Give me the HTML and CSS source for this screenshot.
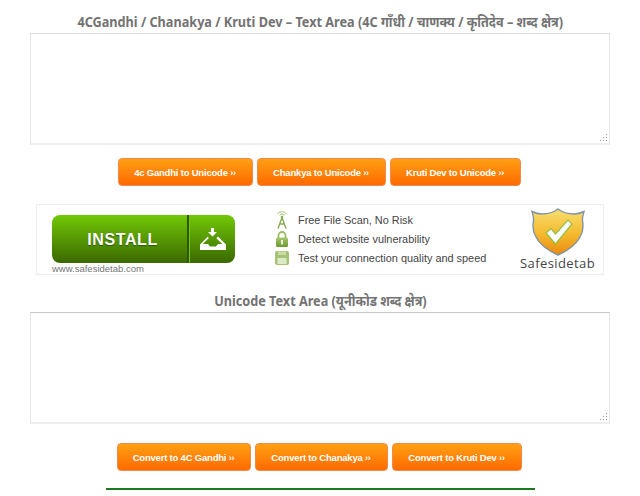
FILE: index.html
```html
<!DOCTYPE html>
<html lang="en">
<head>
    <meta charset="UTF-8">
    <meta name="viewport" content="width=device-width, initial-scale=1.0">
    <title>Unicode Converter</title>
    <link rel="stylesheet" href="styles.css">
</head>
<body>

    <div class="container">
        <h2>4CGandhi / Chanakya / Kruti Dev – Text Area (4C गाँधी / चाणक्य / कृतिदेव – शब्द क्षेत्र)</h2>
        <textarea class="text-box"></textarea>

        <div class="btn-row">
            <button class="btn btn-a">4c Gandhi to Unicode <span class="arrows">››</span></button>
            <button class="btn btn-b">Chankya to Unicode <span class="arrows">››</span></button>
            <button class="btn btn-c">Kruti Dev to Unicode <span class="arrows">››</span></button>
        </div>

        <!-- Ad banner -->
        <div class="banner">
            <div class="banner-left">
                <div class="install">
                    <span class="install-label">INSTALL</span>
                    <span class="install-icon">
                        <svg width="26" height="23" viewBox="0 0 26 23">
                            <path d="M11 0h3v4h3l-4.500 4.500L8 4h3z" fill="#fff"/>
                            <path d="M8 8.500L0 16.500V22h26v-5.500l-8-8-1.700 1.700 6 5.800H18l-2 2.500h-6L8 16H2.700l6-5.800z" fill="#fff"/>
                        </svg>
                    </span>
                </div>
                <div class="banner-url">www.safesidetab.com</div>
            </div>

            <ul class="features">
                <li>
                    <svg width="14" height="18" viewBox="0 0 14 18">
                        <path d="M2.500 3a5.500 5.500 0 0 1 9 0M4.500 4.500a3 3 0 0 1 5 0" fill="none" stroke="#b9d08f" stroke-width="1.100"/>
                        <circle cx="7" cy="6" r="1.300" fill="#8bab55"/>
                        <path d="M7 6.500l-4 11M7 6.500l4 11M4.500 13h5" fill="none" stroke="#8bab55" stroke-width="1.400"/>
                    </svg>
                    Free File Scan, No Risk
                </li>
                <li>
                    <svg width="14" height="16" viewBox="0 0 14 16">
                        <defs>
                            <linearGradient id="lock" x1="0" y1="0" x2="0" y2="1">
                                <stop offset="0" stop-color="#a9c76e"/>
                                <stop offset="1" stop-color="#6d9a2e"/>
                            </linearGradient>
                        </defs>
                        <path d="M3.500 7V4.500a3.500 3.500 0 0 1 7 0V7" fill="none" stroke="#9dbb62" stroke-width="1.800"/>
                        <rect x="1" y="6.500" width="12" height="9.500" rx="1.500" fill="url(#lock)"/>
                        <rect x="6" y="9" width="2" height="4.500" fill="#eef4e0"/>
                    </svg>
                    Detect website vulnerability
                </li>
                <li>
                    <svg width="14" height="14" viewBox="0 0 14 14">
                        <rect x="0" y="0" width="14" height="14" rx="2" fill="#a6c274"/>
                        <rect x="3" y="0.500" width="8" height="3.500" fill="#c9dca6"/>
                        <rect x="2.500" y="7" width="9" height="6" fill="#dde9c6"/>
                    </svg>
                    Test your connection quality and speed
                </li>
            </ul>

            <div class="brand">
                <svg width="54" height="48" viewBox="0 0 54 48">
                    <defs>
                        <linearGradient id="shield" x1="0" y1="0" x2="0" y2="1">
                            <stop offset="0" stop-color="#f9df70"/>
                            <stop offset="0.550" stop-color="#f5b92e"/>
                            <stop offset="1" stop-color="#e98a0c"/>
                        </linearGradient>
                    </defs>
                    <path d="M27 1C31 4 37 6 43 6C47 6 50 5 53 3.500C52 7 51 10 51.500 13C52.500 18 52 24 49 29C45 37 36 43 27 47C18 43 9 37 5 29C2 24 1.500 18 2.500 13C3 10 2 7 1 3.500C4 5 7 6 11 6C17 6 23 4 27 1Z" fill="url(#shield)" stroke="#7f93a8" stroke-width="1.400"/>
                    <path d="M15 25l5-4.500 4.500 5.500L37 12l4 4-16.500 20z" fill="#fff" stroke="#93bf3f" stroke-width="1.200"/>
                </svg>
                <span class="brand-name">Safesidetab</span>
            </div>
        </div>

        <h2 class="second">Unicode Text Area (यूनीकोड शब्द क्षेत्र)</h2>
        <textarea class="text-box box-two"></textarea>

        <div class="btn-row row-two">
            <button class="btn btn-d">Convert to 4C Gandhi <span class="arrows">››</span></button>
            <button class="btn btn-e">Convert to Chanakya <span class="arrows">››</span></button>
            <button class="btn btn-f">Convert to Kruti Dev <span class="arrows">››</span></button>
        </div>

        <div class="rule"></div>
    </div>

</body>
</html>
```

FILE: styles.css
```css
* {
    margin: 0;
    padding: 0;
    box-sizing: border-box;
}
html {
    overflow: hidden;
}
body {
    background: #fff;
    font-family: "Liberation Sans", Arial, sans-serif;
    height: 496px;
    overflow: hidden;
}
.container {
    display: flex;
    flex-direction: column;
    align-items: center;
    padding-top: 12px;
}
h2 {
    font-family: "Noto Sans", "Noto Sans Devanagari", sans-serif;
    font-size: 14px;
    font-weight: bold;
    line-height: 19px;
    margin-bottom: 2px;
    color: #737373;
    white-space: nowrap;
    transform: scaleX(0.905);
}
.text-box {
    display: block;
    width: 580px;
    height: 112px;
    border: 1px solid #e6e6e6;
    border-top-color: #dcdcdc;
    border-bottom: 2px solid #eeeeee;
    outline: none;
    background: #fff;
}
.box-two {
    border-top-color: #c8c8c8;
}
/* little dotted grip instead of the default lines */
.text-box::-webkit-resizer {
    background:
        linear-gradient(#999, #999) 12px 12px / 1px 1px no-repeat,
        linear-gradient(#999, #999) 9px 12px / 1px 1px no-repeat,
        linear-gradient(#999, #999) 6px 12px / 1px 1px no-repeat,
        linear-gradient(#999, #999) 12px 9px / 1px 1px no-repeat,
        linear-gradient(#999, #999) 9px 9px / 1px 1px no-repeat,
        linear-gradient(#999, #999) 12px 6px / 1px 1px no-repeat;
}
.btn-row {
    display: flex;
    gap: 4px;
    margin-top: 13px;
    margin-right: 2px;
}
.btn {
    height: 28px;
    border: 1px solid #f08a4a;
    border-radius: 4px;
    background: linear-gradient(#ffa014, #ff6a00);
    color: #fff;
    font-family: "Liberation Sans", Arial, sans-serif;
    font-size: 9.500px;
    font-weight: bold;
    letter-spacing: -0.2px;
}
.arrows {
    font-size: 9px;
}
.btn-a { width: 135px; }
.btn-b { width: 129px; }
.btn-c { width: 131px; }
.btn-d { width: 134px; }
.btn-e { width: 133px; }
.btn-f { width: 130px; }
.banner {
    display: flex;
    width: 568px;
    height: 71px;
    margin-top: 18px;
    border: 1px solid #ececec;
}
.banner-left {
    width: 215px;
    padding: 10px 0 0 15px;
}
.install {
    display: flex;
    width: 183px;
    height: 48px;
    border-radius: 8px;
    overflow: hidden;
    background: linear-gradient(#72c806, #3a6800);
    color: #fff;
}
.install-label {
    display: flex;
    align-items: center;
    justify-content: center;
    width: 137px;
    padding: 1px 0 0 6px;
    border-right: 2px solid #2f5600;
    font-size: 16px;
    font-weight: bold;
    letter-spacing: 0.6px;
    text-shadow: 0 1px 1px #2f5600;
}
.install-icon {
    display: flex;
    align-items: center;
    justify-content: center;
    flex: 1;
    border-left: 1px solid #74c80c;
}
.banner-url {
    margin-top: 1px;
    font-size: 9.500px;
    line-height: 10px;
    color: #777;
}
.features {
    list-style: none;
    width: 260px;
    padding: 5px 0 0 23px;
    font-size: 10.900px;
    color: #444;
}
.features li {
    display: flex;
    align-items: center;
    gap: 9px;
    height: 19px;
}
.features svg {
    flex: none;
}
.brand {
    display: flex;
    flex-direction: column;
    align-items: center;
    flex: 1;
    padding-top: 3px;
}
.brand-name {
    font-family: "Open Sans", sans-serif;
    font-size: 13px;
    line-height: 15px;
    letter-spacing: 0.4px;
    color: #444;
}
.second {
    margin-top: 16px;
}
.row-two {
    margin-top: 19px;
}
.rule {
    width: 429px;
    height: 2px;
    margin-top: 17px;
    background: #1c7a1c;
}
```
